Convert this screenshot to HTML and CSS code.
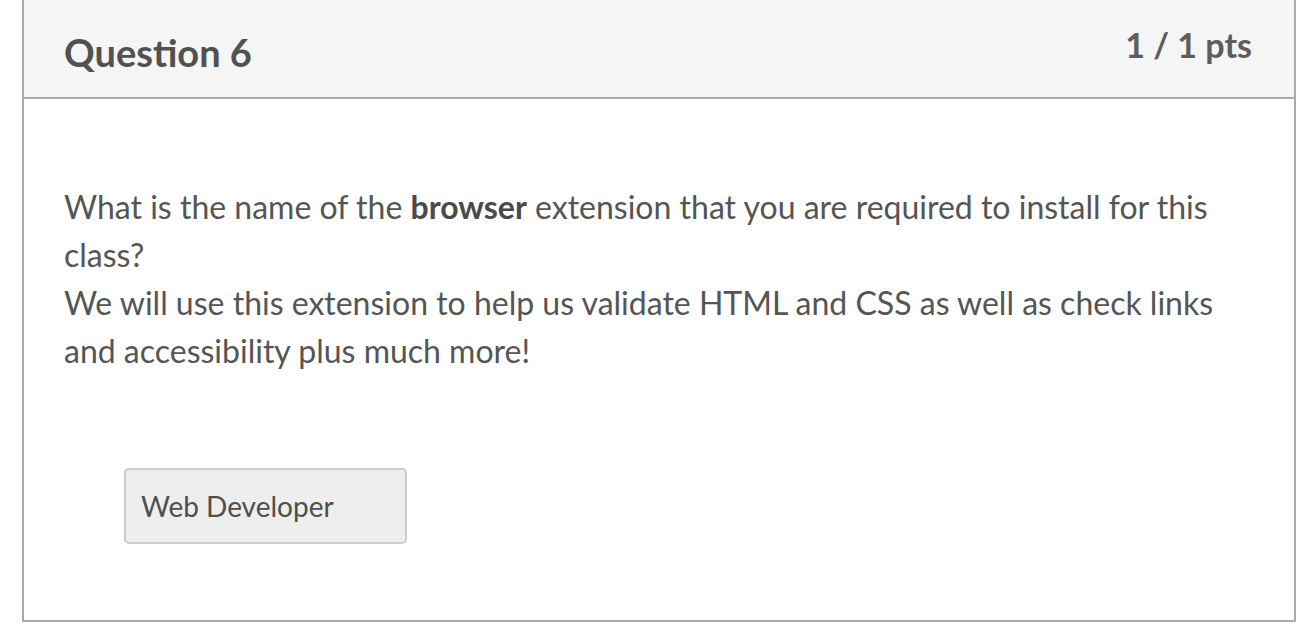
FILE: index.html
```html
<!DOCTYPE html>
<html lang="en">
<head>
<meta charset="utf-8">
<title>Question 6</title>
<link rel="stylesheet" href="styles.css">
</head>
<body>
<div class="question">
  <div class="question-header">
    <h2 class="question-title">Question 6</h2>
    <div class="question-points">1 / 1 pts</div>
  </div>
  <div class="question-body">
    <div class="question-text">
      <p>What is the name of the <strong>browser</strong> extension that you are required to install for this class?<br>We will use this extension to help us validate HTML and CSS as well as check links and accessibility plus much more!</p>
    </div>
    <div class="answers">
      <div class="answer-box">Web Developer</div>
    </div>
  </div>
</div>
</body>
</html>
```
FILE: styles.css
```css
html, body {
  margin: 0;
  padding: 0;
  background: #ffffff;
}
body {
  font-family: Lato, "Open Sans", sans-serif;
  color: #555555;
}
.question {
  margin-left: 22px;
  width: 1270px;
  border: 2px solid #ababab;
  border-top: 0;
}
.question-header {
  display: flex;
  justify-content: space-between;
  align-items: flex-start;
  background: #f5f5f5;
  border-bottom: 2px solid #ababab;
  padding: 0 42px 0 40px;
  box-sizing: border-box;
  height: 99px;
}
.question-title {
  margin: 0;
  padding-top: 30px;
  font-size: 38px;
  font-weight: 700;
  color: #515151;
  line-height: 44px;
}
.question-points {
  padding-top: 25px;
  font-size: 34px;
  font-weight: 700;
  color: #5d5d5d;
  line-height: 40px;
}
.question-body {
  padding: 84px 40px 76px 40px;
}
.question-text p {
  margin: 0;
  font-size: 32px;
  line-height: 48px;
  color: #555555;
}
.question-text strong {
  font-weight: 700;
  color: #4a4a4a;
}
.answers {
  padding: 93px 0 0 60px;
}
.answer-box {
  display: inline-flex;
  align-items: center;
  box-sizing: border-box;
  width: 283px;
  height: 76px;
  padding: 0 15px;
  background: #eeeeee;
  border: 2px solid #cccccc;
  border-radius: 5px;
  font-size: 28px;
  color: #4f4f4f;
}
```
